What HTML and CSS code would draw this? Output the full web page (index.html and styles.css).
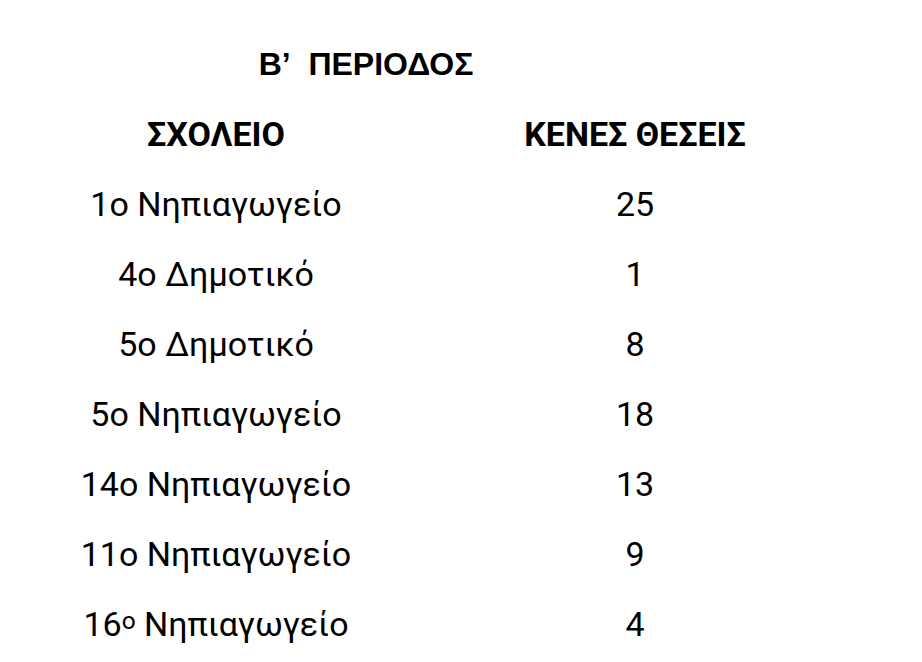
FILE: index.html
```html
<!DOCTYPE html>
<html lang="el">
<head>
<meta charset="utf-8">
<link rel="stylesheet" href="styles.css">
</head>
<body>
<div class="page">
  <h1 class="title">Β’&nbsp; ΠΕΡΙΟΔΟΣ</h1>
  <div class="table">
    <div class="cell head">ΣΧΟΛΕΙΟ</div>
    <div class="cell head">ΚΕΝΕΣ ΘΕΣΕΙΣ</div>
    <div class="cell">1ο Νηπιαγωγείο</div>
    <div class="cell">25</div>
    <div class="cell">4ο Δημοτικό</div>
    <div class="cell">1</div>
    <div class="cell">5ο Δημοτικό</div>
    <div class="cell">8</div>
    <div class="cell">5ο Νηπιαγωγείο</div>
    <div class="cell">18</div>
    <div class="cell">14ο Νηπιαγωγείο</div>
    <div class="cell">13</div>
    <div class="cell">11ο Νηπιαγωγείο</div>
    <div class="cell">9</div>
    <div class="cell">16<span class="sup">ο</span> Νηπιαγωγείο</div>
    <div class="cell">4</div>
  </div>
</div>
</body>
</html>
```
FILE: styles.css
```css
html, body {
  margin: 0;
  padding: 0;
  background: #ffffff;
}
.page {
  padding: 29px 0 0 8px;
  font-family: Roboto, "Liberation Sans", sans-serif;
  color: #000000;
}
.title {
  margin: 0;
  width: 716px;
  height: 70px;
  line-height: 70px;
  text-align: center;
  font-family: "Liberation Sans", Arial, sans-serif;
  font-weight: bold;
  font-size: 32px;
}
.table {
  display: grid;
  grid-template-columns: 416px 422px;
  grid-auto-rows: 70px;
}
.cell {
  line-height: 70px;
  text-align: center;
  font-size: 34px;
  white-space: nowrap;
}
.head {
  font-weight: bold;
}
.sup {
  font-size: 0.72em;
  vertical-align: 0.3em;
  line-height: 0;
}
```
